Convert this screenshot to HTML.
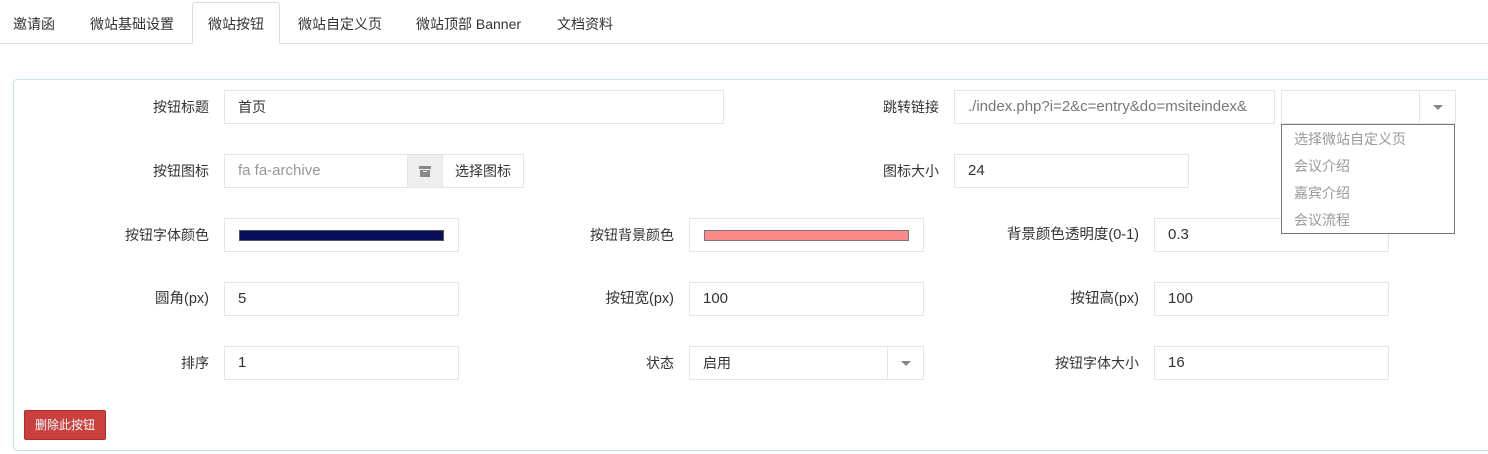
<!DOCTYPE html>
<html><head><meta charset="utf-8"><style>
*{box-sizing:border-box;margin:0;padding:0}
body{width:1488px;height:454px;background:#fff;position:relative;overflow:hidden;font-family:"Liberation Sans","Noto Sans CJK SC",sans-serif;font-size:14px;color:#333}
.a{position:absolute}
.tabline{left:0;top:43px;width:1488px;height:1px;background:#ddd}
.tab{top:14px;font-size:14px;color:#333;white-space:nowrap}
.active{left:192px;top:2px;width:88px;height:42px;border:1px solid #ddd;border-bottom:1px solid #fff;border-radius:4px 4px 0 0;background:#fff}
.panel{left:13px;top:79px;width:1500px;height:372px;border:1px solid #bce8f1;border-radius:4px}
.lbl{text-align:right;width:200px;line-height:34px;white-space:nowrap}
.in{height:34px;border:1px solid #e5e5e5;line-height:32px;padding-left:13px;white-space:nowrap;overflow:hidden;background:#fff;font-size:15px}
.arrow{position:absolute;right:0;top:0;width:36px;height:32px;border-left:1px solid #e5e5e5}
.arrow:after{content:"";position:absolute;left:13px;top:14px;border-left:5px solid transparent;border-right:5px solid transparent;border-top:5px solid #888}
</style></head><body>
<div class="a tabline"></div>
<div class="a active"></div>
<div class="a tab" style="left:13px">邀请函</div>
<div class="a tab" style="left:90px">微站基础设置</div>
<div class="a tab" style="left:208px">微站按钮</div>
<div class="a tab" style="left:298px">微站自定义页</div>
<div class="a tab" style="left:416px">微站顶部 Banner</div>
<div class="a tab" style="left:557px">文档资料</div>

<div class="a panel"></div>

<!-- row1 -->
<div class="a lbl" style="left:9px;top:90px">按钮标题</div>
<div class="a in" style="left:224px;top:90px;width:500px;font-size:14px">首页</div>
<div class="a lbl" style="left:739px;top:90px">跳转链接</div>
<div class="a in" style="left:954px;top:90px;width:321px;color:#777">./index.php?i=2&amp;c=entry&amp;do=msiteindex&amp;</div>
<div class="a in" style="left:1281px;top:90px;width:175px"><span class="arrow"></span></div>
<!-- row2 -->
<div class="a lbl" style="left:9px;top:154px">按钮图标</div>
<div class="a in" style="left:224px;top:154px;width:184px;color:#999">fa fa-archive</div>
<div class="a" style="left:407px;top:154px;width:36px;height:34px;background:#eee;border:1px solid #e5e5e5">
 <div class="a" style="left:11px;top:11px;width:12px;height:3px;background:#888"></div>
 <div class="a" style="left:12px;top:15px;width:10px;height:7px;background:#888"></div>
 <div class="a" style="left:15px;top:16px;width:4px;height:1px;background:#eee"></div>
</div>
<div class="a in" style="left:442px;top:154px;width:82px;padding-left:12px;font-size:14px">选择图标</div>
<div class="a lbl" style="left:739px;top:154px">图标大小</div>
<div class="a in" style="left:954px;top:154px;width:235px">24</div>
<!-- row3 -->
<div class="a lbl" style="left:9px;top:218px">按钮字体颜色</div>
<div class="a in" style="left:224px;top:218px;width:235px"><div class="a" style="left:14px;top:11px;width:205px;height:11px;background:#0a0f5c;border:1px solid #555"></div></div>
<div class="a lbl" style="left:474px;top:218px">按钮背景颜色</div>
<div class="a in" style="left:689px;top:218px;width:235px"><div class="a" style="left:14px;top:11px;width:205px;height:11px;background:#fd8a8a;border:1px solid #777"></div></div>
<div class="a lbl" style="left:939px;top:218px;font-size:14.5px">背景颜色透明度(0-1)</div>
<div class="a in" style="left:1154px;top:218px;width:235px">0.3</div>
<!-- row4 -->
<div class="a lbl" style="left:9px;top:282px;font-size:14.5px">圆角(px)</div>
<div class="a in" style="left:224px;top:282px;width:235px">5</div>
<div class="a lbl" style="left:474px;top:282px;font-size:14.5px">按钮宽(px)</div>
<div class="a in" style="left:689px;top:282px;width:235px">100</div>
<div class="a lbl" style="left:939px;top:282px;font-size:14.5px">按钮高(px)</div>
<div class="a in" style="left:1154px;top:282px;width:235px">100</div>
<!-- row5 -->
<div class="a lbl" style="left:9px;top:346px">排序</div>
<div class="a in" style="left:224px;top:346px;width:235px">1</div>
<div class="a lbl" style="left:474px;top:346px">状态</div>
<div class="a in" style="left:689px;top:346px;width:235px;font-size:14px">启用<span class="arrow"></span></div>
<div class="a lbl" style="left:939px;top:346px">按钮字体大小</div>
<div class="a in" style="left:1154px;top:346px;width:235px">16</div>

<!-- dropdown -->
<div class="a" style="left:1281px;top:124px;width:174px;height:110px;border:1px solid #777;background:#fff;color:#999;font-size:14px;line-height:27px;padding:1px 0 0 12px">
<div>选择微站自定义页</div><div>会议介绍</div><div>嘉宾介绍</div><div>会议流程</div></div>

<div class="a" style="left:24px;top:410px;width:82px;height:30px;background:#c9403f;border:1px solid #b52b2b;border-radius:2px;color:#fff;font-size:12px;line-height:28px;text-align:center">删除此按钮</div>
</body></html>
